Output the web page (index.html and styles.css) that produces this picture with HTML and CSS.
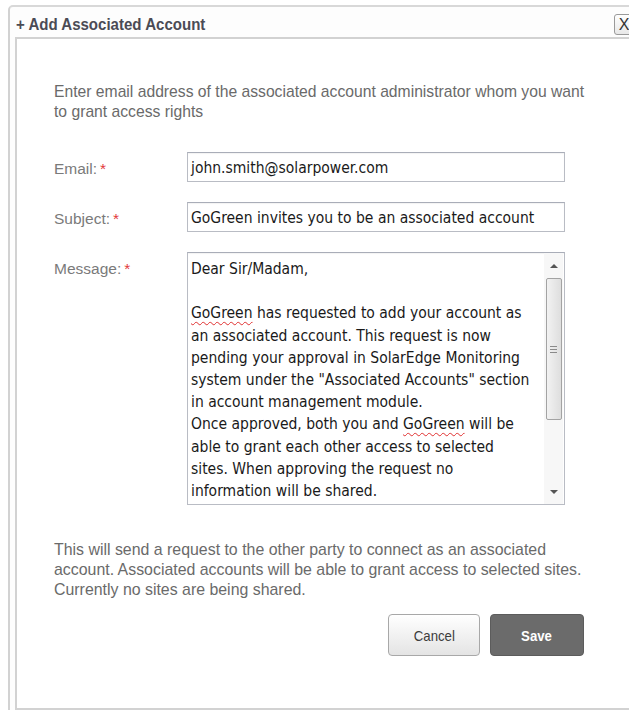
FILE: index.html
```html
<!DOCTYPE html>
<html lang="en">
<head>
<meta charset="utf-8">
<title>Add Associated Account</title>
<link rel="stylesheet" href="styles.css">
</head>
<body>
<div class="dialog">
  <div class="titlebar">
    <span class="title">+ Add Associated Account</span>
    <span class="close">X</span>
  </div>
  <div class="panel">
    <div class="content">
      <p class="intro">Enter email address of the associated account administrator whom you want<br>to grant access rights</p>

      <div class="form">
        <div class="row">
          <span class="label">Email:<span class="req">*</span></span>
          <div class="input">john.smith@solarpower.com</div>
        </div>
        <div class="row">
          <span class="label">Subject:<span class="req">*</span></span>
          <div class="input">GoGreen invites you to be an associated account</div>
        </div>
        <div class="row">
          <span class="label">Message:<span class="req">*</span></span>
          <div class="textarea">
            <div class="msg">Dear Sir/Madam,<br><br><span class="spell">GoGreen</span> has requested to add your account as<br>an associated account. This request is now<br>pending your approval in SolarEdge Monitoring<br>system under the "Associated Accounts" section<br>in account management module.<br>Once approved, both you and <span class="spell">GoGreen</span> will be<br>able to grant each other access to selected<br>sites. When approving the request no<br>information will be shared.</div>
            <div class="scrollbar">
              <span class="arrow up"></span>
              <div class="thumb"><span class="grip"></span></div>
              <span class="arrow down"></span>
            </div>
          </div>
        </div>
      </div>

      <p class="note">This will send a request to the other party to connect as an associated<br>account. Associated accounts will be able to grant access to selected sites.<br>Currently no sites are being shared.</p>

      <div class="actions">
        <button class="btn cancel" type="button"><span class="btn-text">Cancel</span></button>
        <button class="btn save" type="button"><span class="btn-text">Save</span></button>
      </div>
    </div>
  </div>
</div>
</body>
</html>
```

FILE: styles.css
```css
html, body {
  margin: 0;
  padding: 0;
  overflow: hidden;
  background: #ffffff;
}

body {
  font-family: "Liberation Sans", Arial, sans-serif;
  color: #6e6e6e;
}

/* Outer dialog frame */
.dialog {
  margin: 5px 0 0 8px;
  width: 632px;
  height: 720px;
  border-top: 2px solid #d8d8d8;
  border-left: 2px solid #d2d2d2;
  border-top-left-radius: 5px;
  background: #fdfdfd;
  box-sizing: border-box;
}

.titlebar {
  display: flex;
  align-items: center;
  justify-content: space-between;
  height: 30px;
  padding: 0 6px 0 6px;
}

.title {
  display: inline-block;
  margin-top: 5px;
  font-family: "Liberation Sans", Arial, sans-serif;
  font-weight: bold;
  font-size: 17px;
  color: #4b4b55;
  transform: scaleX(0.885);
  transform-origin: left center;
}

.close {
  display: flex;
  align-items: center;
  justify-content: center;
  width: 18px;
  height: 19px;
  margin-top: 5px;
  border: 1px solid #9a9a9a;
  border-radius: 3px;
  background: linear-gradient(#ffffff, #e8e8e8);
  font-family: "Liberation Sans", Arial, sans-serif;
  font-size: 16px;
  color: #333;
}

/* Inner white panel */
.panel {
  margin-left: 5px;
  border-top: 2px solid #d2d2d2;
  border-left: 2px solid #d2d2d2;
  border-bottom: 2px solid #d2d2d2;
  background: #ffffff;
  height: 673px;
  box-sizing: border-box;
}

.content {
  width: 530px;
  padding: 43px 0 0 37px;
}

.intro,
.note {
  margin: 0;
  font-size: 15.9px;
  line-height: 20px;
  color: #6a6a6a;
  white-space: nowrap;
}

.intro {
  font-size: 15.7px;
}

.form {
  display: flex;
  flex-direction: column;
  gap: 20px;
  margin-top: 30px;
}

.row {
  display: flex;
  align-items: flex-start;
}

.label {
  width: 133px;
  flex: none;
  padding-top: 8px;
  font-size: 15.5px;
  color: #7a7a7a;
}

.req {
  color: #e23a3a;
  margin-left: 3px;
}

.input,
.textarea {
  width: 378px;
  box-sizing: border-box;
  border: 1px solid #b9bcc4;
  border-top-color: #a9adb8;
  box-shadow: inset 0 1px 1px rgba(0, 0, 0, 0.05);
  background: #fff;
  font-family: "DejaVu Sans Condensed", "DejaVu Sans", Tahoma, sans-serif;
  font-stretch: condensed;
  font-size: 15.5px;
  color: #1a1a1a;
}

.input {
  height: 30px;
  padding: 6px 0 0 3px;
}

.textarea {
  height: 253px;
  display: flex;
}

.msg {
  flex: 1;
  padding: 5px 0 0 3px;
  line-height: 22.2px;
  white-space: nowrap;
  overflow: hidden;
}

.spell {
  text-decoration: underline wavy #e03030;
  text-decoration-thickness: 1px;
  text-underline-offset: 3px;
}

/* Vertical scroll bar drawn inside the message box */
.scrollbar {
  width: 19px;
  flex: none;
  margin-right: 1px;
  display: flex;
  flex-direction: column;
  align-items: center;
  padding: 6px 0 4px;
  box-sizing: border-box;
  background: #f7f7f7;
}

.arrow {
  width: 0;
  height: 0;
  border-left: 4px solid transparent;
  border-right: 4px solid transparent;
  margin: 5px 0;
}

.arrow.up {
  border-bottom: 4px solid #555;
}

.arrow.down {
  border-top: 4px solid #555;
  margin-top: auto;
  margin-bottom: 6px;
}

.thumb {
  width: 16px;
  height: 142px;
  margin-top: 5px;
  border: 1px solid #a3a3a3;
  border-radius: 2px;
  background: linear-gradient(to right, #f2f2f2, #dedede);
  box-sizing: border-box;
  display: flex;
  align-items: center;
  justify-content: center;
}

.grip {
  width: 7px;
  height: 7px;
  background: repeating-linear-gradient(#8a8a8a 0 1px, transparent 1px 3px);
}

.note {
  margin-top: 35px;
}

.actions {
  display: flex;
  justify-content: flex-end;
  gap: 10px;
  margin-top: 14px;
}

.btn {
  height: 42px;
  border-radius: 4px;
  font-family: "Liberation Sans", Arial, sans-serif;
  font-size: 15px;
  cursor: pointer;
}

.btn-text {
  display: inline-block;
  transform: scaleX(0.88);
}

.cancel {
  width: 92px;
  border: 1px solid #a8a8a8;
  background: linear-gradient(#ffffff, #e4e4e4);
  color: #3c3c3c;
}

.save {
  width: 94px;
  border: 1px solid #5c5c5c;
  background: #6b6b6b;
  color: #ffffff;
  font-weight: bold;
}
```
